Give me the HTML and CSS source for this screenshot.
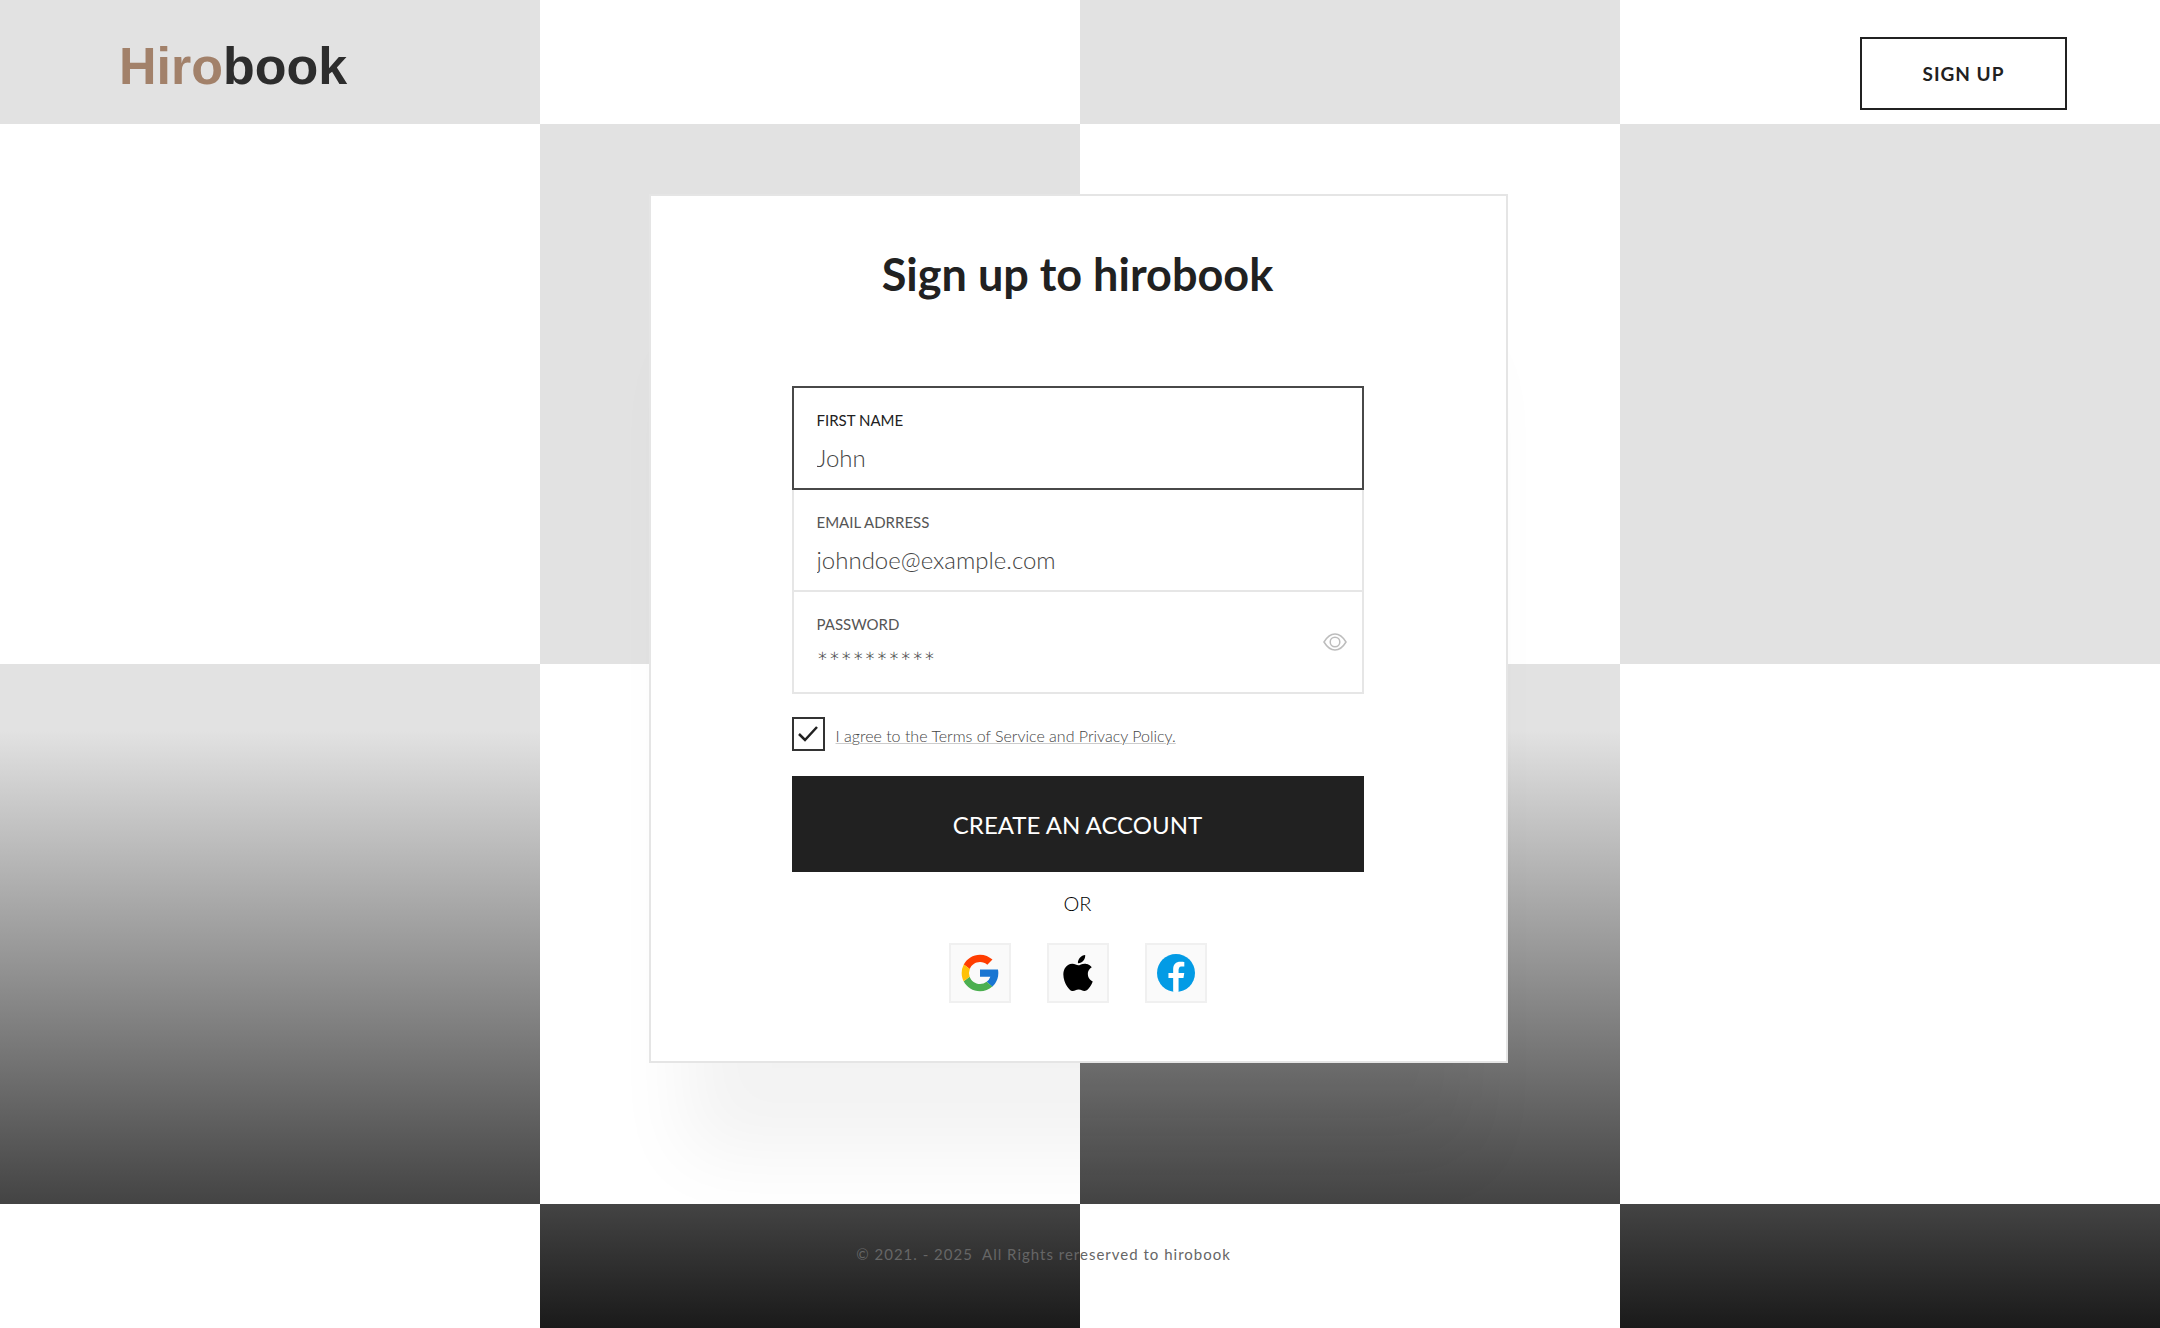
FILE: index.html
```html
<!DOCTYPE html>
<html lang="en">
<head>
<meta charset="utf-8">
<meta name="viewport" content="width=device-width, initial-scale=1">
<title>Hirobook – Sign up</title>
<link rel="stylesheet" href="styles.css">
</head>
<body>
<header class="header">
  <a class="logo" href="#"><span class="logo-accent">Hiro</span>book</a>
  <button class="header-button" type="button">SIGN UP</button>
</header>
<main class="main">
  <section class="card">
    <h1 class="title">Sign up to hirobook</h1>
    <form class="form">
      <div class="field field-active">
        <div class="field-body">
          <label class="field-label" for="first-name">FIRST NAME</label>
          <input class="field-input" id="first-name" type="text" placeholder="John">
        </div>
      </div>
      <div class="field">
        <div class="field-body">
          <label class="field-label" for="email">EMAIL ADRRESS</label>
          <input class="field-input" id="email" type="email" placeholder="johndoe@example.com">
        </div>
      </div>
      <div class="field">
        <div class="field-body">
          <label class="field-label" for="password">PASSWORD</label>
          <input class="field-input field-input-password" id="password" type="password" placeholder="**********">
        </div>
        <button class="reveal" type="button" aria-label="Show password">
          <svg width="24" height="18" viewBox="0 0 24 18" fill="none" stroke="#bdbdbd" stroke-width="1.5"><path d="M1 9C4 4 7.5 1 12 1s8 3 11 8c-3 5-6.500 8-11 8S4 14 1 9Z"/><circle cx="12" cy="9" r="4.800"/></svg>
        </button>
      </div>
      <div class="consent">
        <input class="consent-box" id="consent" type="checkbox" checked>
        <label class="consent-text" for="consent">I agree to the Terms of Service and Privacy Policy.</label>
      </div>
      <button class="submit" type="submit">CREATE AN ACCOUNT</button>
    </form>
    <p class="divider">OR</p>
    <div class="socials">
      <button class="social" type="button" aria-label="Continue with Google">
        <svg width="44" height="44" viewBox="0 0 48 48"><path fill="#1976D2" d="M43.611 20.083H24v8h11.303a12.040 12.040 0 0 1-4.087 5.571l6.190 5.238C36.971 39.205 44 34 44 24c0-1.341-.138-2.650-.389-3.917z"/><path fill="#FF3D00" d="m6.306 14.691 6.571 4.819C14.655 15.108 18.961 12 24 12c3.059 0 5.842 1.154 7.961 3.039l5.657-5.657C34.046 6.053 29.268 4 24 4 16.318 4 9.656 8.337 6.306 14.691z"/><path fill="#4CAF50" d="M24 44c5.166 0 9.860-1.977 13.409-5.192l-6.190-5.238A11.910 11.910 0 0 1 24 36c-5.202 0-9.619-3.317-11.283-7.946l-6.522 5.025C9.505 39.556 16.227 44 24 44z"/><path fill="#FFC107" d="M6.306 14.691A19.900 19.900 0 0 0 4 24c0 3.270.79 6.360 2.195 9.079l6.522-5.025A12 12 0 0 1 12.877 19.510z"/></svg>
      </button>
      <button class="social" type="button" aria-label="Continue with Apple">
        <svg width="36" height="36" viewBox="0 0 24 24"><path fill="#000" d="M12.152 6.896c-.948 0-2.415-1.078-3.960-1.040-2.040.027-3.910 1.183-4.961 3.014-2.117 3.675-.546 9.103 1.519 12.090 1.013 1.454 2.208 3.090 3.792 3.039 1.520-.065 2.090-.987 3.935-.987 1.831 0 2.350.987 3.960.948 1.637-.026 2.676-1.480 3.676-2.948 1.156-1.688 1.636-3.325 1.662-3.415-.039-.013-3.182-1.221-3.220-4.857-.026-3.040 2.480-4.494 2.597-4.559-1.429-2.090-3.623-2.324-4.390-2.376-2-.156-3.675 1.090-4.610 1.090zM15.530 3.830c.843-1.012 1.400-2.427 1.245-3.830-1.207.052-2.662.805-3.532 1.818-.78.896-1.454 2.338-1.273 3.714 1.338.104 2.715-.688 3.559-1.701"/></svg>
      </button>
      <button class="social" type="button" aria-label="Continue with Facebook">
        <svg width="48" height="48" viewBox="0 0 48 48"><path fill="#039BE5" d="M24 5a19 19 0 1 0 0 38 19 19 0 1 0 0-38Z"/><path fill="#fff" d="M26.572 29.036h4.917l.772-4.995h-5.690v-2.730c0-2.075.678-3.915 2.619-3.915h3.119v-4.359c-.548-.074-1.707-.236-3.897-.236-4.573 0-7.254 2.415-7.254 7.917v3.323h-4.701v4.995h4.701v13.729c.931.140 1.874.235 2.842.235.875 0 1.729-.080 2.572-.194z"/></svg>
      </button>
    </div>
  </section>
</main>
<footer class="footer">© 2021. - 2025&nbsp; All Rights rereserved to hirobook</footer>
</body>
</html>
```
FILE: styles.css
```css
* { box-sizing: border-box; }

body {
  margin: 0;
  min-height: 100vh;
  display: flex;
  flex-direction: column;
  font-family: Lato, "Liberation Sans", sans-serif;
  color: #212121;
  background:
    conic-gradient(transparent 25%, #fff 0 50%, transparent 0 75%, #fff 0) 0 50% / 50vw 50vw,
    linear-gradient(#e2e2e2 55%, #1a1a1a);
}

button { font-family: inherit; cursor: pointer; padding: 0; }

.header {
  display: flex;
  justify-content: space-between;
  align-items: flex-start;
  padding: 37px 93px 0 119px;
}

.logo {
  font: bold 52px/58px "Liberation Sans", Arial, sans-serif;
  color: #2d2d2d;
  text-decoration: none;
}

.logo-accent { color: #a2816a; }

.header-button {
  width: 207px;
  height: 73px;
  border: 2px solid #212121;
  background: #fff;
  color: #212121;
  font-size: 19px;
  font-weight: 700;
  letter-spacing: 1px;
}

.main {
  display: flex;
  justify-content: center;
  padding: 84px 4px 0 0;
}

.card {
  width: 859px;
  padding: 50px 142px 58px 141px;
  border: 2px solid #e5e5e5;
  background: #fff;
  box-shadow: 0 128px 72px -36px rgba(0, 0, 0, 0.05);
}

.title {
  margin: 0 0 84px;
  font-size: 45px;
  line-height: 56px;
  font-weight: 700;
  text-align: center;
  white-space: nowrap;
}

.form { display: flex; flex-direction: column; }

.field {
  display: flex;
  align-items: center;
  height: 104px;
  padding: 0 15px 0 23px;
  border: 2px solid #e6e6e6;
}

.field + .field { margin-top: -2px; }

.field-active {
  position: relative;
  border-color: #484848;
}

.field-body {
  flex: 1;
  display: flex;
  flex-direction: column;
  gap: 11px;
  padding: 22px 0 15px;
}

.field-label {
  font-size: 15px;
  line-height: 20px;
  color: #555;
}

.field-active .field-label { color: #212121; }

.field-input {
  width: 100%;
  height: 32px;
  padding: 0;
  border: 0;
  outline: 0;
  background: none;
  font-family: inherit;
  font-size: 24px;
  font-weight: 300;
  color: #212121;
}

.field-input-password { font-size: 28px; }

.field-input::placeholder { color: #444; opacity: 1; }

.reveal {
  display: flex;
  border: 0;
  background: none;
}

.consent {
  display: flex;
  align-items: center;
  gap: 11px;
  margin: 23px 0 25px;
}

.consent-box {
  appearance: none;
  width: 33px;
  height: 34px;
  margin: 0;
  border: 2px solid #333;
  background: #fff url("data:image/svg+xml,%3Csvg xmlns='http://www.w3.org/2000/svg' viewBox='0 0 20 16' fill='none' stroke='%23212121' stroke-width='2.500'%3E%3Cpath d='M1 8l6 6L19 1'/%3E%3C/svg%3E") center / 20px 16px no-repeat;
}

.consent-text {
  padding-top: 4px;
  font-size: 16px;
  line-height: 20px;
  font-weight: 300;
  color: #444;
  text-decoration: underline #ccc 1px;
}

.submit {
  height: 96px;
  border: 0;
  background: #212121;
  color: #fff;
  font-size: 24px;
}

.divider {
  margin: 19px 0 28px;
  font-size: 20px;
  line-height: 24px;
  font-weight: 300;
  color: #000;
  text-align: center;
}

.socials {
  display: flex;
  justify-content: center;
  gap: 36px;
}

.social {
  display: flex;
  align-items: center;
  justify-content: center;
  width: 62px;
  height: 60px;
  border: 2px solid #f0f0f0;
  background: #fafafa;
}

.footer {
  margin-top: 179px;
  padding: 0 73px 60px 0;
  font-size: 15px;
  line-height: 24px;
  letter-spacing: 1px;
  color: #666;
  text-align: center;
}
```
